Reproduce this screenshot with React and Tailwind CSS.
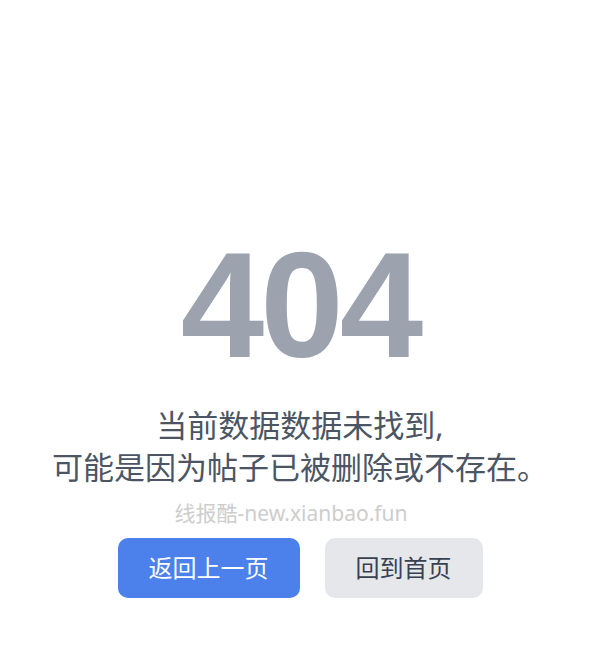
export default function App() {
  const cjk = { fontFamily: '"Noto Sans", "Noto Sans CJK SC", sans-serif' };
  return (
    <div className="min-h-screen bg-white flex flex-col items-center pt-[230px]" style={cjk}>
      <h1
        className="text-[150px] font-bold leading-none tracking-[-4px] text-[#9ca3af]"
        style={{ fontFamily: '"Liberation Sans", Arial, sans-serif' }}
      >
        404
      </h1>
      <p className="mt-[24px] text-[31px] leading-[42px] text-[#4b5563] text-center">
        当前数据数据未找到,
        <br />
        可能是因为帖子已被删除或不存在。
      </p>
      <div className="mt-[11px] pr-[18px] text-[21px] leading-[29px] text-[#cdcdcd]">线报酷-new.xianbao.fun</div>
      <div className="mt-[10px] flex gap-[25px]">
        <button className="h-[60px] px-[31px] rounded-[10px] bg-[#4c80ea] text-white text-[24px] leading-none">
          返回上一页
        </button>
        <button className="h-[60px] px-[31px] rounded-[10px] bg-[#e5e7eb] text-[#374151] text-[24px] leading-none">
          回到首页
        </button>
      </div>
    </div>
  );
}
